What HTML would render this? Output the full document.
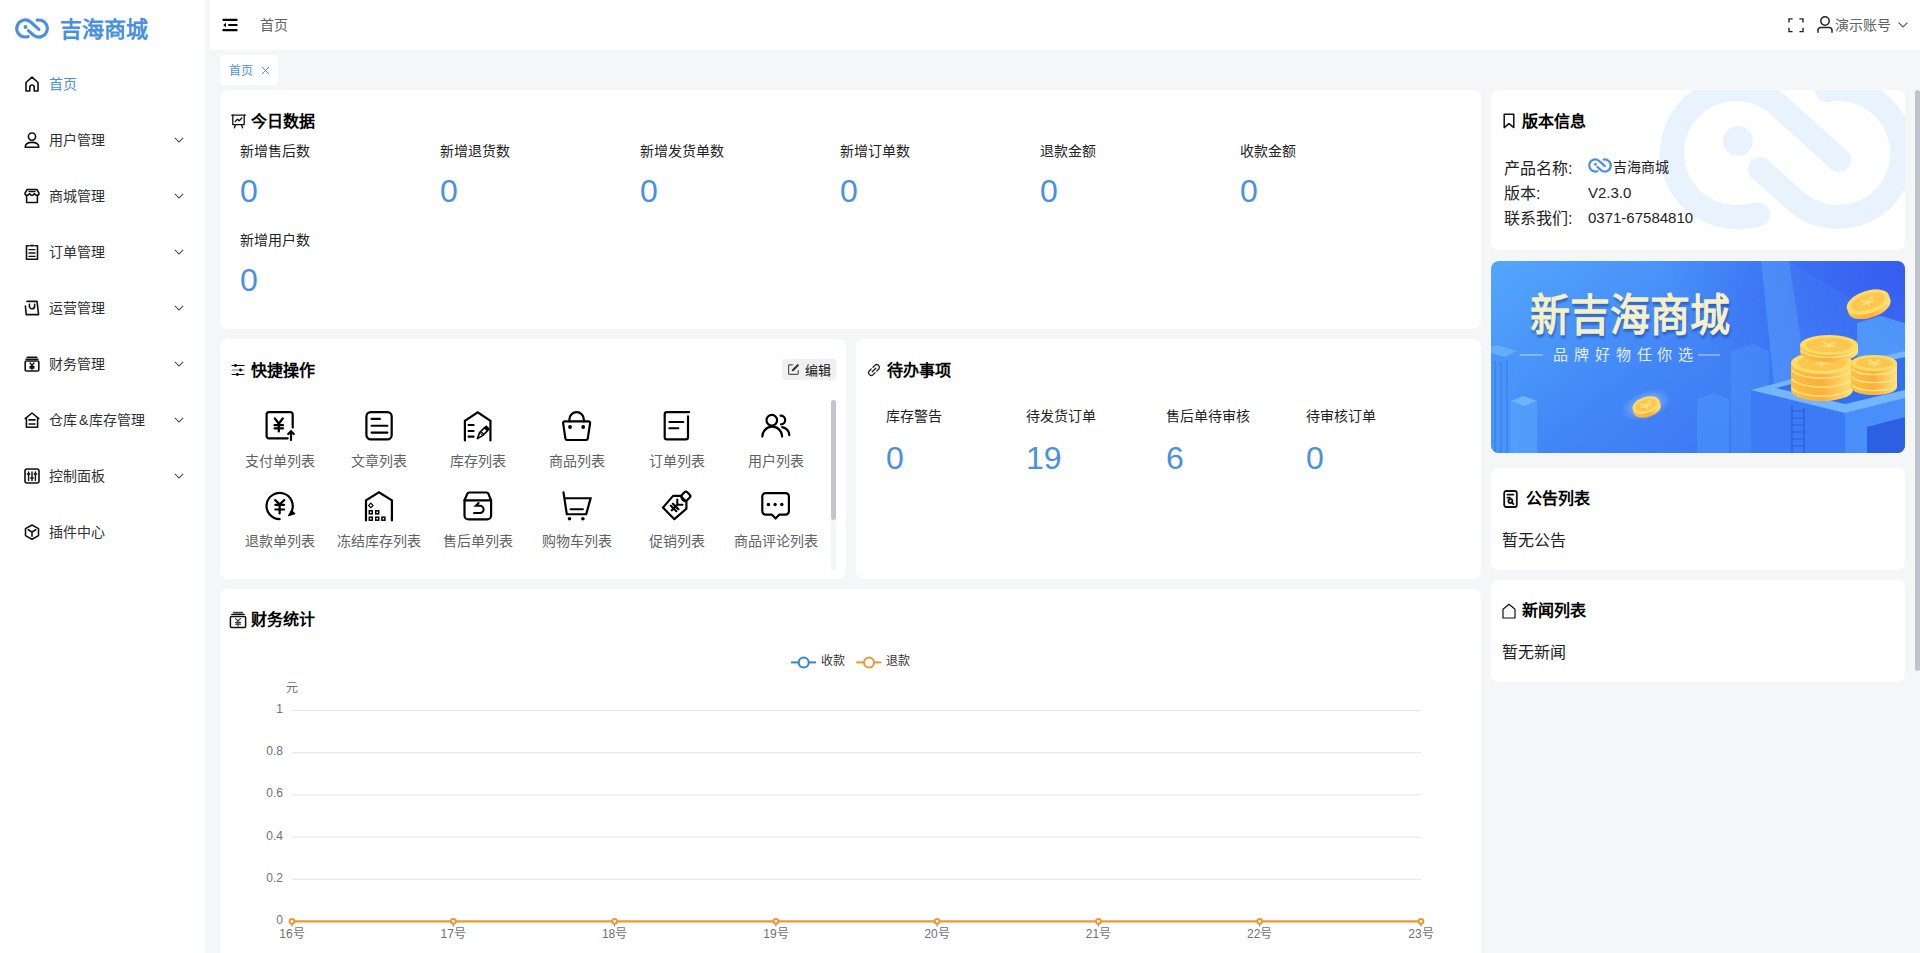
<!DOCTYPE html>
<html lang="zh-CN"><head><meta charset="utf-8">
<style>
*{margin:0;padding:0;box-sizing:border-box}
html,body{width:1920px;height:953px;overflow:hidden;background:#f5f6f8;font-family:"Liberation Sans",sans-serif;color:#333}
.abs{position:absolute}
.side{position:absolute;left:0;top:0;width:205px;height:953px;background:#fff}
.hdr{position:absolute;left:210px;top:0;width:1710px;height:50px;background:#fff}
.card{position:absolute;background:#fff;border-radius:8px;overflow:hidden}
.t{position:absolute;white-space:nowrap;line-height:1}
.menu .t{font-size:14px;color:#303133}
svg{position:absolute;overflow:visible}
.ttl{font-size:16px;font-weight:bold;color:#000}
.lbl{font-size:14px;color:#222}
.num{font-size:32px;color:#4a90e2}
.ql{font-size:14px;color:#606266}
.ax{font-size:12px;color:#6e7079}
</style></head><body>

<!-- SIDEBAR -->
<div class="side menu">
  <svg style="left:15px;top:17.5px" width="34" height="21" viewBox="0 0 256 154"><g fill="none" stroke="#4a90e2" stroke-width="24" stroke-linecap="round"><path d="M99 138.5 Q89 141 77 141 A64 64 0 1 1 118.1 28 L180 84"/><path d="M101 93 L137.9 126 A64 64 0 1 0 167.9 14"/></g><circle cx="79" cy="65" r="15" fill="#4a90e2"/></svg>
  <div class="t" style="left:60px;top:19px;font-size:22px;font-weight:bold;color:#4a90e2">吉海商城</div>
<!--MENU-->
  <svg style="left:24px;top:76px" width="16" height="16" viewBox="0 0 16 16" fill="none" stroke="#111" stroke-width="1.6" stroke-linejoin="round" stroke-linecap="round"><path d="M2 15V6.5L8 1.2L14 6.5V15H10.2V11.2A2.2 2.2 0 0 0 5.8 11.2V15Z"/></svg>
  <div class="t" style="left:49px;top:77px;color:#4a90e2">首页</div>
  <svg style="left:24px;top:132px" width="16" height="16" viewBox="0 0 16 16" fill="none" stroke="#111" stroke-width="1.6" stroke-linejoin="round" stroke-linecap="round"><circle cx="8" cy="4.6" r="3.6"/><path d="M1.2 15.2C1.2 11.8 4 10.4 8 10.4S14.8 11.8 14.8 15.2Z"/></svg>
  <div class="t" style="left:49px;top:133px">用户管理</div>
  <svg style="left:174px;top:137px" width="10" height="6" viewBox="0 0 10 6" fill="none" stroke="#555" stroke-width="1.1"><path d="M0.8 0.8L5 5L9.2 0.8"/></svg>
  <svg style="left:24px;top:188px" width="16" height="16" viewBox="0 0 16 16" fill="none" stroke="#111" stroke-width="1.6" stroke-linejoin="round" stroke-linecap="round"><path d="M3.2 1.5H12.8L15 5.2C15 6.6 14 7.3 13 7.3S11 6.4 10.4 5.7C9.8 6.6 9 7.3 8 7.3S6.2 6.6 5.6 5.7C5 6.4 4 7.3 3 7.3S1 6.6 1 5.2Z"/><path d="M2.6 8.4V14.5H13.4V8.4"/><path d="M5 3.5H11" stroke-width="1.4"/></svg>
  <div class="t" style="left:49px;top:189px">商城管理</div>
  <svg style="left:174px;top:193px" width="10" height="6" viewBox="0 0 10 6" fill="none" stroke="#555" stroke-width="1.1"><path d="M0.8 0.8L5 5L9.2 0.8"/></svg>
  <svg style="left:24px;top:244px" width="16" height="16" viewBox="0 0 16 16" fill="none" stroke="#111" stroke-width="1.6" stroke-linejoin="round" stroke-linecap="round"><path d="M5 1.8H2.5V15.2H13.5V1.8H11"/><path d="M6.5 1.6H9.5" stroke-width="1.8"/><path d="M5 5.6H11M5 9H11M5 12.4H11" stroke-width="1.3"/></svg>
  <div class="t" style="left:49px;top:245px">订单管理</div>
  <svg style="left:174px;top:249px" width="10" height="6" viewBox="0 0 10 6" fill="none" stroke="#555" stroke-width="1.1"><path d="M0.8 0.8L5 5L9.2 0.8"/></svg>
  <svg style="left:24px;top:300px" width="16" height="16" viewBox="0 0 16 16" fill="none" stroke="#111" stroke-width="1.6" stroke-linejoin="round" stroke-linecap="round"><path d="M3 1.4H13L14.6 14.6H2.2L1.4 6"/><path d="M5.4 4.2V6.2A2.6 2.6 0 0 0 10.6 6.2V4.2"/></svg>
  <div class="t" style="left:49px;top:301px">运营管理</div>
  <svg style="left:174px;top:305px" width="10" height="6" viewBox="0 0 10 6" fill="none" stroke="#555" stroke-width="1.1"><path d="M0.8 0.8L5 5L9.2 0.8"/></svg>
  <svg style="left:24px;top:356px" width="16" height="16" viewBox="0 0 16 16" fill="none" stroke="#111" stroke-width="1.6" stroke-linejoin="round" stroke-linecap="round"><path d="M3.2 1.2H12.8" stroke-width="1.6"/><path d="M2 3.2H14" stroke-width="1.4"/><rect x="1.2" y="5" width="13.6" height="10" rx="1"/><path d="M6 7L8 9.2L10 7M8 9.2V13.5M6 10.5H10M6 12H10" stroke-width="1.3"/></svg>
  <div class="t" style="left:49px;top:357px">财务管理</div>
  <svg style="left:174px;top:361px" width="10" height="6" viewBox="0 0 10 6" fill="none" stroke="#555" stroke-width="1.1"><path d="M0.8 0.8L5 5L9.2 0.8"/></svg>
  <svg style="left:24px;top:412px" width="16" height="16" viewBox="0 0 16 16" fill="none" stroke="#111" stroke-width="1.6" stroke-linejoin="round" stroke-linecap="round"><path d="M1.2 6.6L8 1L14.8 6.6"/><path d="M2.4 6V15.2H13.6V6"/><path d="M5 7.9H11" stroke-width="1.6"/><path d="M5 12H11" stroke-width="1.3"/></svg>
  <div class="t" style="left:49px;top:413px">仓库<span style="margin:0 1px 0 2px">&amp;</span>库存管理</div>
  <svg style="left:174px;top:417px" width="10" height="6" viewBox="0 0 10 6" fill="none" stroke="#555" stroke-width="1.1"><path d="M0.8 0.8L5 5L9.2 0.8"/></svg>
  <svg style="left:24px;top:468px" width="16" height="16" viewBox="0 0 16 16" fill="none" stroke="#111" stroke-width="1.6" stroke-linejoin="round" stroke-linecap="round"><rect x="1" y="1" width="14" height="14" rx="2"/><path d="M4.6 4V12.5M8 4V12.5M11.4 4V12.5" stroke-width="1.4"/><path d="M3.4 6H5.8M6.8 10H9.2M10.2 6H12.6" stroke-width="1.6"/></svg>
  <div class="t" style="left:49px;top:469px">控制面板</div>
  <svg style="left:174px;top:473px" width="10" height="6" viewBox="0 0 10 6" fill="none" stroke="#555" stroke-width="1.1"><path d="M0.8 0.8L5 5L9.2 0.8"/></svg>
  <svg style="left:24px;top:524px" width="16" height="16" viewBox="0 0 16 16" fill="none" stroke="#111" stroke-width="1.6" stroke-linejoin="round" stroke-linecap="round"><path d="M8 1L14.5 4.6V11.6L8 15.2L1.5 11.6V4.6Z"/><path d="M4.2 5.8L8 8L11.8 5.8M8 8V12.2"/></svg>
  <div class="t" style="left:49px;top:525px">插件中心</div>
<!--/MENU-->
</div>

<!-- HEADER -->
<div class="hdr"></div>
<svg style="left:222px;top:18px" width="16" height="14" viewBox="0 0 16 14"><g fill="#000"><rect x="0.3" y="0.7" width="15.4" height="2.2" rx="1.1"/><rect x="6" y="5.9" width="9.7" height="2.2" rx="1.1"/><rect x="0.3" y="11.1" width="15.4" height="2.2" rx="1.1"/><path d="M1.2 7L4 4.8V9.2Z"/></g></svg>
<div class="t" style="left:260px;top:18px;font-size:14px;color:#606266">首页</div>
<svg style="left:1788px;top:17.5px" width="16" height="15" viewBox="0 0 16 15" fill="none" stroke="#222" stroke-width="1.4"><path d="M1 4.6V0.9H4.6M11.4 0.9H15V4.6M15 9.8V13.6H11.4M4.6 13.6H1V9.8"/></svg>
<svg style="left:1817px;top:16px" width="16" height="17" viewBox="0 0 16 17" fill="none" stroke="#222" stroke-width="1.5" stroke-linecap="round"><circle cx="8" cy="5" r="4.2"/><path d="M1 16.2V14.2C1 12.6 2 11.4 4 11.4H12C14 11.4 15 12.6 15 14.2V16.2"/></svg>
<div class="t" style="left:1835px;top:18px;font-size:14px;color:#606266">演示账号</div>
<svg style="left:1898px;top:22px" width="10" height="6" viewBox="0 0 10 6" fill="none" stroke="#555" stroke-width="1.2"><path d="M0.6 0.6L5 5L9.4 0.6"/></svg>

<!-- TAB -->
<div class="abs" style="left:220px;top:55px;width:58px;height:30px;background:#fff;border-radius:4px"></div>
<div class="t" style="left:229px;top:65px;font-size:12px;color:#4a90e2">首页</div>
<svg style="left:261px;top:65.5px" width="9" height="9" viewBox="0 0 9 9" fill="none" stroke="#4a90e2" stroke-width="1"><path d="M1 1L8 8M8 1L1 8"/></svg>

<!-- CARDS -->
<div class="card" style="left:220px;top:90px;width:1261px;height:239px"></div>
<div class="card" style="left:220px;top:339px;width:626px;height:240px"></div>
<div class="card" style="left:856px;top:339px;width:625px;height:240px"></div>
<div class="card" style="left:220px;top:589px;width:1261px;height:400px"></div>
<div class="card" style="left:1491px;top:90px;width:414px;height:160px"><svg style="left:168px;top:-14px" width="256" height="154" viewBox="0 0 256 154"><g fill="none" stroke="#e8f3fe" stroke-width="24" stroke-linecap="round"><path d="M99 138.5 Q89 141 77 141 A64 64 0 1 1 118.1 28 L180 84"/><path d="M101 93 L137.9 126 A64 64 0 1 0 167.9 14"/></g><circle cx="79" cy="65" r="15" fill="#e8f3fe"/></svg></div>
<div class="card" style="left:1491px;top:261px;width:414px;height:192px"><svg style="left:0;top:0" width="414" height="192" viewBox="0 0 414 192">
<defs>
<linearGradient id="bg" x1="0" y1="0" x2="1" y2="0.6"><stop offset="0" stop-color="#52a6fc"/><stop offset="0.55" stop-color="#4285f6"/><stop offset="1" stop-color="#3b72f4"/></linearGradient>
<radialGradient id="tr" cx="1" cy="0" r="0.9"><stop offset="0" stop-color="#3457ef" stop-opacity="0.85"/><stop offset="1" stop-color="#3457ef" stop-opacity="0"/></radialGradient>
<linearGradient id="ce" x1="0" y1="0" x2="1" y2="0"><stop offset="0" stop-color="#ffbf45"/><stop offset="0.5" stop-color="#ffae3a"/><stop offset="1" stop-color="#ffe27a"/></linearGradient>
<radialGradient id="glow"><stop offset="0" stop-color="#ffffff" stop-opacity="0.5"/><stop offset="1" stop-color="#ffffff" stop-opacity="0"/></radialGradient>
</defs>
<rect width="414" height="192" fill="url(#bg)"/>
<rect x="150" y="0" width="264" height="192" fill="url(#tr)"/>
<path d="M270 0H298L318 132H284Z" fill="#6ab8ff" opacity="0.35"/>
<path d="M298 0L414 70V112L318 132Z" fill="#5aa8fb" opacity="0.12"/>
<path d="M0 86L6 84L26 90V192H0Z" fill="#4a95f8" opacity="0.9"/>
<path d="M0 86L6 84L26 90L14 96L0 92Z" fill="#7cc0ff" opacity="0.55"/>
<path d="M4 100V192M10 101V192M16 99V192" stroke="#3a82f0" stroke-width="2" opacity="0.7"/>
<path d="M20 140L32 135L46 140V192H20Z" fill="#52a0fb" opacity="0.85"/>
<path d="M20 140L32 135L46 140L33 145Z" fill="#80c2fe" opacity="0.6"/>
<path d="M206 138L222 132L238 138V192H206Z" fill="#4d97fa" opacity="0.55"/>
<path d="M240 90L262 83L278 90V192H240Z" fill="#4b92f9" opacity="0.5"/>
<path d="M366 62L390 55L414 62V110H366Z" fill="#5eb0fc" opacity="0.6"/>
<path d="M260 129L354 152V192H260Z" fill="#3c7bf5"/>
<path d="M354 152L414 137V192H354Z" fill="#4a8ef9"/>
<path d="M376 192V166L414 156V192Z" fill="#2c5fe2"/>
<path d="M260 129L345 106L414 90V137L354 152Z" fill="#74b6fd"/>
<path d="M285 127L350 110L414 96V129L354 143Z" fill="#3070f1"/>
<path d="M301 192V144M313 192V147" stroke="#2a5fd6" stroke-width="1.3"/>
<path d="M301 150H313M301 157H313M301 164H313M301 171H313M301 178H313M301 185H313" stroke="#2a5fd6" stroke-width="1"/>
<path d="M300 120 V129 A31 11 0 0 0 362 129 V120 Z" fill="url(#ce)"/><path d="M301 127 A31 11 0 0 0 361 127" fill="none" stroke="#ffe889" stroke-width="1.4"/><path d="M300 111 V120 A31 11 0 0 0 362 120 V111 Z" fill="url(#ce)"/><path d="M301 118 A31 11 0 0 0 361 118" fill="none" stroke="#ffe889" stroke-width="1.4"/><path d="M300 102 V111 A31 11 0 0 0 362 111 V102 Z" fill="url(#ce)"/><path d="M301 109 A31 11 0 0 0 361 109" fill="none" stroke="#ffe889" stroke-width="1.4"/><ellipse cx="331" cy="102" rx="31" ry="11" fill="#ffdc66"/><ellipse cx="331" cy="102" rx="24.8" ry="7.9" fill="#fbc74e"/><path d="M325 99L331 102L337 99M331 102V106M325 103H337" stroke="#ffe082" stroke-width="1.6" fill="none"/>
<path d="M309 84 V91 A29 10 0 0 0 367 91 V84 Z" fill="url(#ce)"/><path d="M310 89 A29 10 0 0 0 366 89" fill="none" stroke="#ffe889" stroke-width="1.4"/><ellipse cx="338" cy="84" rx="29" ry="10" fill="#ffdc66"/><ellipse cx="338" cy="84" rx="23.2" ry="7.2" fill="#fbc74e"/><path d="M332 81L338 84L344 81M338 84V88M332 85H344" stroke="#ffe082" stroke-width="1.6" fill="none"/>
<path d="M360 118 V126 A23 8 0 0 0 406 126 V118 Z" fill="url(#ce)"/><path d="M361 124 A23 8 0 0 0 405 124" fill="none" stroke="#ffe889" stroke-width="1.4"/><path d="M360 110 V118 A23 8 0 0 0 406 118 V110 Z" fill="url(#ce)"/><path d="M361 116 A23 8 0 0 0 405 116" fill="none" stroke="#ffe889" stroke-width="1.4"/><path d="M360 102 V110 A23 8 0 0 0 406 110 V102 Z" fill="url(#ce)"/><path d="M361 108 A23 8 0 0 0 405 108" fill="none" stroke="#ffe889" stroke-width="1.4"/><ellipse cx="383" cy="102" rx="23" ry="8" fill="#ffdc66"/><ellipse cx="383" cy="102" rx="18.4" ry="5.8" fill="#fbc74e"/><path d="M377 99L383 102L389 99M383 102V106M377 103H389" stroke="#ffe082" stroke-width="1.6" fill="none"/>
<g transform="rotate(-18 376 38)"><path d="M354 41 V46 A22 11 0 0 0 398 46 V41 Z" fill="url(#ce)"/><path d="M355 44 A22 11 0 0 0 397 44" fill="none" stroke="#ffe889" stroke-width="1.4"/><ellipse cx="376" cy="41" rx="22" ry="11" fill="#ffdc66"/><ellipse cx="376" cy="41" rx="17.6" ry="7.9" fill="#fbc74e"/><path d="M370 38L376 41L382 38M376 41V45M370 42H382" stroke="#ffe082" stroke-width="1.6" fill="none"/></g>
<ellipse cx="155" cy="144" rx="26" ry="14" fill="url(#glow)" transform="rotate(-20 155 144)"/>
<g transform="rotate(-18 155 144)"><path d="M141 144 V148 A14 8 0 0 0 169 148 V144 Z" fill="url(#ce)"/><path d="M142 146 A14 8 0 0 0 168 146" fill="none" stroke="#ffe889" stroke-width="1.4"/><ellipse cx="155" cy="144" rx="14" ry="8" fill="#ffdc66"/><ellipse cx="155" cy="144" rx="11.2" ry="5.8" fill="#fbc74e"/><path d="M149 141L155 144L161 141M155 144V148M149 145H161" stroke="#ffe082" stroke-width="1.6" fill="none"/></g>
<path d="M29 94H52M207 94H229" stroke="#e9f0c8" stroke-width="1.2" opacity="0.8"/>
</svg><div class="t" style="left:39px;top:34px;font-family:'Liberation Serif',serif;font-weight:bold;font-size:40px;color:#f4f0c8;text-shadow:1px 2px 2px rgba(20,50,150,0.45);transform:scaleY(1.1);transform-origin:0 0">新吉海商城</div><div class="t" style="left:62px;top:86px;font-size:15px;letter-spacing:5.9px;color:#e6eefc">品牌好物任你选</div></div>
<div class="card" style="left:1491px;top:468px;width:414px;height:102px"></div>
<div class="card" style="left:1491px;top:580px;width:414px;height:102px"></div>

<!--C1-->
<svg style="left:231px;top:114px" width="15" height="15" viewBox="0 0 15 15" fill="none" stroke="#111" stroke-width="1.3" stroke-linecap="round" stroke-linejoin="round"><path d="M0.7 1.2H14.3"/><path d="M1.8 1.2V10.6H13.2V1.2"/><path d="M4.6 10.6L3.4 13.8M10.4 10.6L11.6 13.8"/><path d="M4.2 7.6L6.4 5.2L8.2 6.8L10.8 4"/></svg>
<div class="t ttl" style="left:251px;top:114px">今日数据</div>
<div class="t lbl" style="left:240px;top:144px">新增售后数</div>
<div class="t num" style="left:240px;top:175px">0</div>
<div class="t lbl" style="left:440px;top:144px">新增退货数</div>
<div class="t num" style="left:440px;top:175px">0</div>
<div class="t lbl" style="left:640px;top:144px">新增发货单数</div>
<div class="t num" style="left:640px;top:175px">0</div>
<div class="t lbl" style="left:840px;top:144px">新增订单数</div>
<div class="t num" style="left:840px;top:175px">0</div>
<div class="t lbl" style="left:1040px;top:144px">退款金额</div>
<div class="t num" style="left:1040px;top:175px">0</div>
<div class="t lbl" style="left:1240px;top:144px">收款金额</div>
<div class="t num" style="left:1240px;top:175px">0</div>
<div class="t lbl" style="left:240px;top:233px">新增用户数</div>
<div class="t num" style="left:240px;top:264px">0</div>
<svg style="left:867px;top:363px" width="14" height="14" viewBox="0 0 14 14" fill="none" stroke="#222" stroke-width="1.3" stroke-linecap="round"><path d="M6 4.2L7.8 2.4A2.5 2.5 0 0 1 11.6 6.2L9.8 8"/><path d="M8 9.8L6.2 11.6A2.5 2.5 0 0 1 2.4 7.8L4.2 6"/><path d="M5.2 8.8L8.8 5.2"/></svg>
<div class="t ttl" style="left:887px;top:363px">待办事项</div>
<div class="t lbl" style="left:886px;top:409px">库存警告</div>
<div class="t num" style="left:886px;top:442px">0</div>
<div class="t lbl" style="left:1026px;top:409px">待发货订单</div>
<div class="t num" style="left:1026px;top:442px">19</div>
<div class="t lbl" style="left:1166px;top:409px">售后单待审核</div>
<div class="t num" style="left:1166px;top:442px">6</div>
<div class="t lbl" style="left:1306px;top:409px">待审核订单</div>
<div class="t num" style="left:1306px;top:442px">0</div>
<!--Q-->
<svg style="left:228px;top:360px" width="20" height="20" viewBox="0 0 20 20" stroke-linecap="round"><g stroke-width="1.2"><path d="M4.1 5.5H16" stroke="#000"/><path d="M4.1 10H16" stroke="#777"/><path d="M4.1 14.5H16" stroke="#000"/></g><g fill="#000"><circle cx="7.5" cy="5.5" r="1.4"/><circle cx="12.5" cy="10" r="1.4"/><circle cx="9.4" cy="14.5" r="1.4"/></g></svg>
<div class="t ttl" style="left:251px;top:363px">快捷操作</div>
<div class="abs" style="left:782px;top:359px;width:54px;height:21px;background:#f0f0f0;border-radius:3px"></div>
<svg style="left:787px;top:363px" width="13" height="13" viewBox="0 0 13 13" fill="none" stroke="#555" stroke-width="1.2" stroke-linecap="round"><path d="M5.4 1.8H2.4A0.8 0.8 0 0 0 1.6 2.6V10.6A0.8 0.8 0 0 0 2.4 11.4H10.4A0.8 0.8 0 0 0 11.2 10.6V7.6"/><path d="M5.8 7.2L10.8 2.2" stroke-width="2.1" stroke="#333"/></svg>
<div class="t" style="left:805px;top:364px;font-size:13px;color:#111">编辑</div>
<svg style="left:264.8px;top:411px" width="30" height="30" viewBox="0 0 30 30" fill="none" stroke="#000" stroke-width="2.2" stroke-linecap="round"><path d="M27.7 16.6V3.4A2.3 2.3 0 0 0 25.4 1.1H3.9A2.3 2.3 0 0 0 1.6 3.4V25.1A2.3 2.3 0 0 0 3.9 27.4H22.6"/><path d="M26 29V20.2M23.2 23L26 20.2L28.8 23"/><path d="M9.8 7.4L13.8 12.8L17.8 7.4M13.8 12.8V20.4M9.6 14.2H18M9.6 17.3H18" stroke-width="2.3"/></svg>
<div class="t ql" style="left:229.8px;width:100px;text-align:center;top:454px">支付单列表</div>
<svg style="left:364.0px;top:411px" width="30" height="30" viewBox="0 0 30 30" fill="none" stroke="#000" stroke-width="2.2" stroke-linecap="round"><rect x="2.4" y="1.1" width="25.3" height="27.3" rx="4.4"/><path d="M7.6 7.9H15.9M7.6 14.75H23.4M7.6 21.6H23.4"/></svg>
<div class="t ql" style="left:329.0px;width:100px;text-align:center;top:454px">文章列表</div>
<svg style="left:463.2px;top:411px" width="30" height="30" viewBox="0 0 30 30" fill="none" stroke="#000" stroke-width="2.2" stroke-linecap="round"><path d="M1.9 29.5V9.75L14.7 1.4L27.45 9.75V29.5"/><path d="M5.6 14H10.6M5.6 20H10.6M5.6 25.6H10.6"/><path d="M14.4 27.6L16.6 21.6L21.6 16.6L24.6 19.6L19.6 24.6Z" stroke-width="1.6" stroke-linejoin="round"/><path d="M21.6 16.6L23.2 15L26.2 18L24.6 19.6Z" fill="#000" stroke-width="1.2"/><circle cx="18.9" cy="22.4" r="1.1" stroke-width="1"/></svg>
<div class="t ql" style="left:428.2px;width:100px;text-align:center;top:454px">库存列表</div>
<svg style="left:562.4px;top:411px" width="30" height="30" viewBox="0 0 30 30" fill="none" stroke="#000" stroke-width="2.2" stroke-linecap="round"><path d="M7.4 10.4V8.3A7.2 7.2 0 0 1 21.8 8.3V10.4"/><path d="M2.6 10.4H26.6A1.5 1.5 0 0 1 28.1 12.1L25.8 27.4A1.8 1.8 0 0 1 24 29H5.2A1.8 1.8 0 0 1 3.4 27.4L1.1 12.1A1.5 1.5 0 0 1 2.6 10.4Z"/><circle cx="8" cy="16" r="1.9" fill="#000" stroke="none"/><circle cx="21.2" cy="16" r="1.9" fill="#000" stroke="none"/></svg>
<div class="t ql" style="left:527.4px;width:100px;text-align:center;top:454px">商品列表</div>
<svg style="left:661.6px;top:411px" width="30" height="30" viewBox="0 0 30 30" fill="none" stroke="#000" stroke-width="2.2" stroke-linecap="round"><path d="M27.1 1.1H4.9A2.2 2.2 0 0 0 2.7 3.3V26.2A2.2 2.2 0 0 0 4.9 28.4H23.8A2.2 2.2 0 0 0 26 26.2V5.4"/><path d="M7.4 11H21.3M7.4 17.25H16.3"/></svg>
<div class="t ql" style="left:626.6px;width:100px;text-align:center;top:454px">订单列表</div>
<svg style="left:760.8px;top:411px" width="30" height="30" viewBox="0 0 30 30" fill="none" stroke="#000" stroke-width="2.2" stroke-linecap="round"><circle cx="10.8" cy="9.2" r="5.3"/><path d="M1.3 25.6A9.9 9.9 0 0 1 21.1 25.6"/><path d="M19.6 4.6A4.4 4.4 0 0 1 20 13.4"/><path d="M21.2 16.1C25.6 17.2 28.2 20.4 28.3 24.2"/></svg>
<div class="t ql" style="left:725.8px;width:100px;text-align:center;top:454px">用户列表</div>
<svg style="left:264.8px;top:491px" width="30" height="30" viewBox="0 0 30 30" fill="none" stroke="#000" stroke-width="2.2" stroke-linecap="round"><path d="M14.65 28.15A13.1 13.1 0 1 1 26.37 20.9"/><path d="M23.6 24.6L29.8 22.6L26.6 19.6Z" fill="#000" stroke-width="1.2" stroke-linejoin="round"/><path d="M10.2 9.1L14.65 13.3L19.2 9.1M14.65 13.3V22.5M10.3 13.8H19.1M10.3 18.5H19.1" stroke-width="2.2"/></svg>
<div class="t ql" style="left:229.8px;width:100px;text-align:center;top:534px">退款单列表</div>
<svg style="left:364.0px;top:491px" width="30" height="30" viewBox="0 0 30 30" fill="none" stroke="#000" stroke-width="2.2" stroke-linecap="round"><path d="M2 29.5V9.25L14.9 1.3L27.9 9.25V29.5"/><path d="M6.8 12.2L9 14.4L6.8 16.6L4.6 14.4Z" stroke-width="1.2"/><g stroke-width="1.5"><rect x="5.3" y="19.8" width="3" height="3"/><rect x="11.7" y="19.8" width="3" height="3"/><rect x="5.3" y="26.2" width="3" height="3"/><rect x="11.7" y="26.2" width="3" height="3"/><rect x="17.9" y="26.2" width="3" height="3"/></g></svg>
<div class="t ql" style="left:329.0px;width:100px;text-align:center;top:534px">冻结库存列表</div>
<svg style="left:463.2px;top:491px" width="30" height="30" viewBox="0 0 30 30" fill="none" stroke="#000" stroke-width="2.2" stroke-linecap="round"><path d="M1.5 9.3L4.4 2.6A1.8 1.8 0 0 1 6 1.5H23.7A1.8 1.8 0 0 1 25.3 2.6L28.1 9.3V24.4A4 4 0 0 1 24.1 28.4H5.5A4 4 0 0 1 1.5 24.4Z"/><path d="M1.5 9.3H28.1"/><path d="M15.6 12L12.8 14.8H17A3.6 3.6 0 0 1 17 22H11" stroke-width="2"/></svg>
<div class="t ql" style="left:428.2px;width:100px;text-align:center;top:534px">售后单列表</div>
<svg style="left:562.4px;top:491px" width="30" height="30" viewBox="0 0 30 30" fill="none" stroke="#000" stroke-width="2.2" stroke-linecap="round"><path d="M1.5 1.4L4.8 23.25H24.2L28.6 7.25H3"/><path d="M8.6 18.25H20.85"/><circle cx="7.5" cy="27.7" r="1.8" fill="#000" stroke="none"/><circle cx="20.9" cy="27.7" r="1.8" fill="#000" stroke="none"/></svg>
<div class="t ql" style="left:527.4px;width:100px;text-align:center;top:534px">购物车列表</div>
<svg style="left:661.6px;top:491px" width="30" height="30" viewBox="0 0 30 30" fill="none" stroke="#000" stroke-width="2.2" stroke-linecap="round"><path d="M11.1 4.9H19.3A6 6 0 0 0 24.4 10.5V17.7L12.4 28.2L0.9 16.6Z" stroke-linejoin="round"/><rect x="20.2" y="1.4" width="7.4" height="7.4" rx="2" transform="rotate(45 23.9 5.1)"/><g transform="rotate(45 15.3 13.8)" stroke-width="2.1"><path d="M11.6 10.1L15.3 13.8L19 10.1M15.3 13.8V21.6M11.4 16.1H19.2M11.4 19H19.2"/></g></svg>
<div class="t ql" style="left:626.6px;width:100px;text-align:center;top:534px">促销列表</div>
<svg style="left:760.8px;top:491px" width="30" height="30" viewBox="0 0 30 30" fill="none" stroke="#000" stroke-width="2.2" stroke-linecap="round"><path d="M4.6 2.1H24.6A3.3 3.3 0 0 1 27.9 5.4V20.3A3.3 3.3 0 0 1 24.6 23.6H18.4L14.6 27.5L10.8 23.6H4.6A3.3 3.3 0 0 1 1.3 20.3V5.4A3.3 3.3 0 0 1 4.6 2.1Z" stroke-linejoin="round"/><circle cx="7.4" cy="13.5" r="1.7" fill="#000" stroke="none"/><circle cx="14.1" cy="13.5" r="1.7" fill="#000" stroke="none"/><circle cx="20.8" cy="13.5" r="1.7" fill="#000" stroke="none"/></svg>
<div class="t ql" style="left:725.8px;width:100px;text-align:center;top:534px">商品评论列表</div>
<div class="abs" style="left:831px;top:400px;width:5px;height:170px;background:#f4f5f7;border-radius:2px"></div>
<div class="abs" style="left:831px;top:400px;width:5px;height:120px;background:#c0c4cc;border-radius:3px"></div>
<!--/Q-->
<!--R-->
<svg style="left:1503px;top:113px" width="12" height="16" viewBox="0 0 12 16" fill="none" stroke="#111" stroke-width="1.5" stroke-linejoin="round"><path d="M1.2 1.2H10.8V14.6L6 10.6L1.2 14.6Z"/></svg>
<div class="t ttl" style="left:1522px;top:114px">版本信息</div>
<div class="t" style="left:1504px;top:161px;font-size:16px;color:#222">产品名称:</div>
<div class="t" style="left:1504px;top:186px;font-size:16px;color:#222">版本:</div>
<div class="t" style="left:1504px;top:211px;font-size:16px;color:#222">联系我们:</div>
<svg style="left:1588px;top:158px" width="24" height="15" viewBox="0 0 256 154"><g fill="none" stroke="#4a90e2" stroke-width="24" stroke-linecap="round"><path d="M99 138.5 Q89 141 77 141 A64 64 0 1 1 118.1 28 L180 84"/><path d="M101 93 L137.9 126 A64 64 0 1 0 167.9 14"/></g><circle cx="79" cy="65" r="15" fill="#4a90e2"/></svg>
<div class="t" style="left:1613px;top:160px;font-size:14px;color:#222">吉海商城</div>
<div class="t" style="left:1588px;top:185px;font-size:15px;color:#222">V2.3.0</div>
<div class="t" style="left:1588px;top:210px;font-size:15px;color:#222">0371-67584810</div>
<svg style="left:1503px;top:490px" width="15" height="18" viewBox="0 0 15 18" fill="none" stroke="#111" stroke-width="1.8" stroke-linecap="round"><rect x="1.2" y="1" width="12.6" height="16" rx="2"/><path d="M4.4 4.6H10.4M4.4 7.6H7"/><circle cx="7.4" cy="11" r="2"/><path d="M8.8 12.4L10.4 14"/></svg>
<div class="t ttl" style="left:1526px;top:491px">公告列表</div>
<div class="t" style="left:1502px;top:533px;font-size:16px;color:#222">暂无公告</div>
<svg style="left:1502px;top:603px" width="14" height="16" viewBox="0 0 14 16" fill="none" stroke="#111" stroke-width="1.2" stroke-linejoin="round"><path d="M1 15V6.2L7 1.2L13 6.2V15Z"/></svg>
<div class="t ttl" style="left:1522px;top:603px">新闻列表</div>
<div class="t" style="left:1502px;top:645px;font-size:16px;color:#222">暂无新闻</div>
<!--/R-->
<!--CH-->
<svg style="left:229px;top:611px" width="18" height="18" viewBox="0 0 18 18" fill="none" stroke="#111" stroke-width="1.5" stroke-linecap="round"><path d="M4.6 1.6H13.4" stroke="#444" stroke-width="1.6"/><path d="M2.8 3.4H15.2" stroke-width="1.3"/><rect x="1.4" y="5.4" width="15.2" height="11" rx="1.2"/><path d="M6.6 7.6L9 10L11.4 7.6M9 10V15M6.6 11.4H11.4M6.6 13.2H11.4" stroke-width="1.2" stroke="#333"/></svg>
<div class="t ttl" style="left:251px;top:612px">财务统计</div>
<svg style="left:790px;top:654.5px" width="130" height="15" viewBox="0 0 130 15" fill="none" stroke-width="2"><path d="M1 7.4H26" stroke="#2f86e0"/><circle cx="13.7" cy="7.4" r="5" fill="#fff" stroke="#2f86e0"/><path d="M66.2 7.4H91.4" stroke="#ec9830"/><circle cx="79" cy="7.4" r="5" fill="#fff" stroke="#ec9830"/></svg>
<div class="t" style="left:821px;top:655px;font-size:12px;color:#333">收款</div>
<div class="t" style="left:886px;top:655px;font-size:12px;color:#333">退款</div>
<div class="t ax" style="left:286px;top:682px">元</div>
<div class="t ax" style="left:200px;width:83px;text-align:right;top:703.0px">1</div>
<div class="t ax" style="left:200px;width:83px;text-align:right;top:745.2px">0.8</div>
<div class="t ax" style="left:200px;width:83px;text-align:right;top:787.4px">0.6</div>
<div class="t ax" style="left:200px;width:83px;text-align:right;top:829.6px">0.4</div>
<div class="t ax" style="left:200px;width:83px;text-align:right;top:871.8px">0.2</div>
<div class="t ax" style="left:200px;width:83px;text-align:right;top:914.0px">0</div>
<svg style="left:0;top:0" width="1920" height="953" viewBox="0 0 1920 953"><path d="M292 710.5H1421" stroke="#e2e5eb" stroke-width="1"/><path d="M292 752.7H1421" stroke="#e2e5eb" stroke-width="1"/><path d="M292 794.9H1421" stroke="#e2e5eb" stroke-width="1"/><path d="M292 837.1H1421" stroke="#e2e5eb" stroke-width="1"/><path d="M292 879.3H1421" stroke="#e2e5eb" stroke-width="1"/><path d="M292.0 921.5V926.5" stroke="#6e7079" stroke-width="1"/><path d="M453.3 921.5V926.5" stroke="#6e7079" stroke-width="1"/><path d="M614.6 921.5V926.5" stroke="#6e7079" stroke-width="1"/><path d="M775.9 921.5V926.5" stroke="#6e7079" stroke-width="1"/><path d="M937.1 921.5V926.5" stroke="#6e7079" stroke-width="1"/><path d="M1098.4 921.5V926.5" stroke="#6e7079" stroke-width="1"/><path d="M1259.7 921.5V926.5" stroke="#6e7079" stroke-width="1"/><path d="M1421.0 921.5V926.5" stroke="#6e7079" stroke-width="1"/><path d="M292 921.3H1421" stroke="#ec9830" stroke-width="2.2"/><circle cx="292.0" cy="921.3" r="2.4" fill="#fff" stroke="#ec9830" stroke-width="2"/><circle cx="453.3" cy="921.3" r="2.4" fill="#fff" stroke="#ec9830" stroke-width="2"/><circle cx="614.6" cy="921.3" r="2.4" fill="#fff" stroke="#ec9830" stroke-width="2"/><circle cx="775.9" cy="921.3" r="2.4" fill="#fff" stroke="#ec9830" stroke-width="2"/><circle cx="937.1" cy="921.3" r="2.4" fill="#fff" stroke="#ec9830" stroke-width="2"/><circle cx="1098.4" cy="921.3" r="2.4" fill="#fff" stroke="#ec9830" stroke-width="2"/><circle cx="1259.7" cy="921.3" r="2.4" fill="#fff" stroke="#ec9830" stroke-width="2"/><circle cx="1421.0" cy="921.3" r="2.4" fill="#fff" stroke="#ec9830" stroke-width="2"/></svg>
<div class="t ax" style="left:262.0px;width:60px;text-align:center;top:928px">16号</div>
<div class="t ax" style="left:423.3px;width:60px;text-align:center;top:928px">17号</div>
<div class="t ax" style="left:584.6px;width:60px;text-align:center;top:928px">18号</div>
<div class="t ax" style="left:745.9px;width:60px;text-align:center;top:928px">19号</div>
<div class="t ax" style="left:907.1px;width:60px;text-align:center;top:928px">20号</div>
<div class="t ax" style="left:1068.4px;width:60px;text-align:center;top:928px">21号</div>
<div class="t ax" style="left:1229.7px;width:60px;text-align:center;top:928px">22号</div>
<div class="t ax" style="left:1391.0px;width:60px;text-align:center;top:928px">23号</div>
<!--/CH-->
<!--/C1-->
<!-- scrollbar -->
<div class="abs" style="left:1915px;top:90px;width:5px;height:581px;background:#c0c4cc;border-radius:3px"></div>
</body></html>
